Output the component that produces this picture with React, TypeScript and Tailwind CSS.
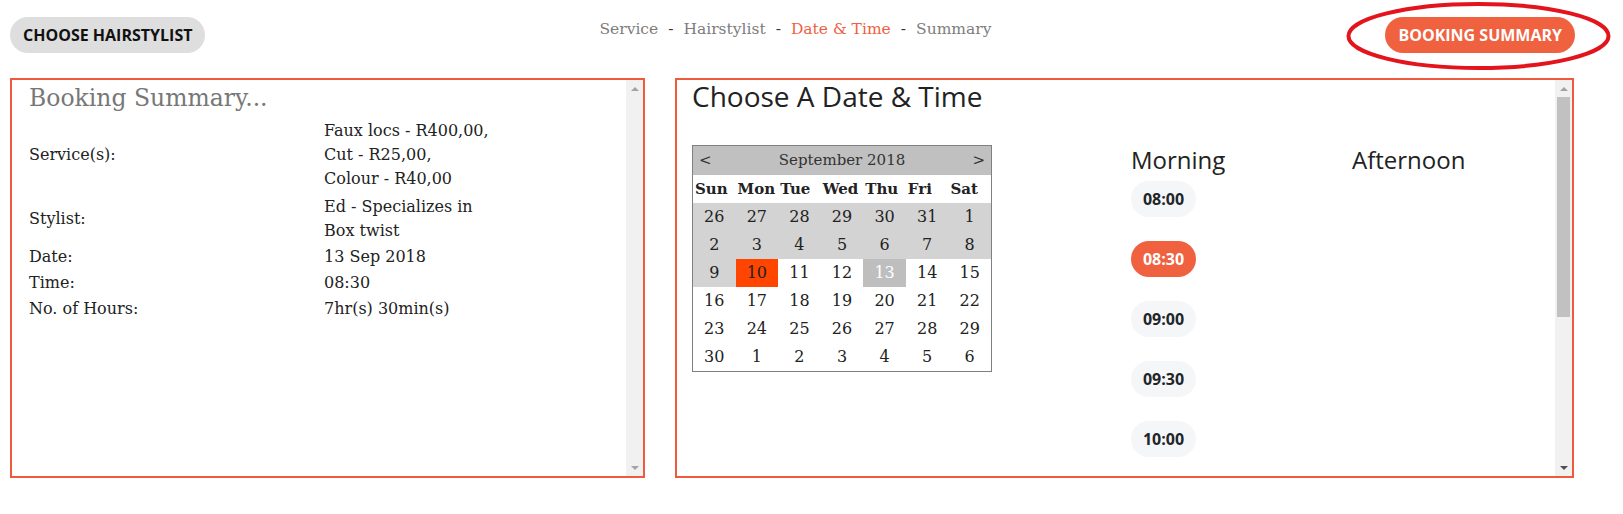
const weeks = [
  [26, 27, 28, 29, 30, 31, 1],
  [2, 3, 4, 5, 6, 7, 8],
  [9, 10, 11, 12, 13, 14, 15],
  [16, 17, 18, 19, 20, 21, 22],
  [23, 24, 25, 26, 27, 28, 29],
  [30, 1, 2, 3, 4, 5, 6],
];
const days = ["Sun", "Mon", "Tue", "Wed", "Thu", "Fri", "Sat"];
const times = ["08:00", "08:30", "09:00", "09:30", "10:00"];

const summary = [
  { label: "Service(s):", value: ["Faux locs - R400,00,", "Cut - R25,00,", "Colour - R40,00"] },
  { label: "Stylist:", value: ["Ed - Specializes in", "Box twist"] },
  { label: "Date:", value: ["13 Sep 2018"] },
  { label: "Time:", value: ["08:30"] },
  { label: "No. of Hours:", value: ["7hr(s) 30min(s)"] },
];

const Arrow = ({ up, color }: { up?: boolean; color: string }) => (
  <div className="h-[17px] flex items-center justify-center">
    {up ? (
      <div className={`w-0 h-0 border-x-[4px] border-x-transparent border-b-[4px] ${color}`} />
    ) : (
      <div className={`w-0 h-0 border-x-[4px] border-x-transparent border-t-[4px] ${color}`} />
    )}
  </div>
);

const Scrollbar = ({ thumb }: { thumb?: boolean }) => (
  <div className="w-[17px] shrink-0 bg-[#f1f1f1] flex flex-col">
    <Arrow up color="border-b-[#a3a3a3]" />
    <div className="flex-1 px-[2px]">
      {thumb && <div className="h-[220px] bg-[#c1c1c1]" />}
    </div>
    <Arrow color={thumb ? "border-t-[#505050]" : "border-t-[#a3a3a3]"} />
  </div>
);

const Calendar = () => (
  <div className="w-[300px] border border-[#808080] font-['DejaVu_Serif',serif] text-[#222]">
    <div className="h-[29px] bg-[#c0c0c0] flex items-center justify-between px-[6px] text-[15px] text-[#333]">
      <span>&lt;</span>
      <span>September 2018</span>
      <span>&gt;</span>
    </div>
    <div className="grid grid-cols-7 h-[28px] items-center text-[15px] font-bold">
      {days.map((d) => (
        <div key={d} className="pl-[2px] whitespace-nowrap">
          {d}
        </div>
      ))}
    </div>
    {weeks.map((week, wi) => (
      <div key={wi} className="grid grid-cols-7">
        {week.map((n, di) => {
          const past = wi < 2 || (wi === 2 && di === 0);
          const today = wi === 2 && n === 10;
          const picked = wi === 2 && n === 13;
          return (
            <div
              key={di}
              className={`h-[28px] flex items-center justify-center text-[16px] ${
                today
                  ? "bg-[#ff4500]"
                  : picked
                  ? "bg-[#bebebe] text-white"
                  : past
                  ? "bg-[#d3d3d3]"
                  : "bg-white"
              }`}
            >
              {n}
            </div>
          );
        })}
      </div>
    ))}
  </div>
);

export default function App() {
  return (
    <div className="w-[1623px] h-[514px] bg-white relative overflow-hidden">
      <header className="flex items-start justify-between pl-[10px] pr-[48px] pt-[17px]">
        <button className="h-9 px-[13px] rounded-full bg-[#dedede] text-[#111] font-['Open_Sans',sans-serif] font-bold text-[16px]">
          CHOOSE HAIRSTYLIST
        </button>
        <nav className="flex items-center gap-[10px] leading-[24px] text-[15.5px] font-['DejaVu_Serif',serif] text-[#7d7d7d]">
          <span>Service</span>
          <span className="text-[#333]">-</span>
          <span>Hairstylist</span>
          <span className="text-[#333]">-</span>
          <span className="text-[#f0603f]">Date &amp; Time</span>
          <span className="text-[#333]">-</span>
          <span>Summary</span>
        </nav>
        <button className="h-9 px-[13px] rounded-full bg-[#f0613f] text-white font-['Open_Sans',sans-serif] font-bold text-[16px]">
          BOOKING SUMMARY
        </button>
      </header>

      <svg className="absolute left-[1345px] top-[1px] pointer-events-none" width="267" height="70">
        <ellipse cx="133.5" cy="35" rx="130" ry="32" fill="none" stroke="#e3141c" strokeWidth="4" />
      </svg>

      <main className="flex gap-[30px] pl-[10px] mt-[25px]">
        <section className="w-[635px] h-[400px] border-2 border-[#f05a3c] flex">
          <div className="flex-1 pl-[17px] pt-[3px] font-['DejaVu_Serif',serif]">
            <h2 className="text-[23.5px] leading-[30px] text-[#777]">Booking Summary...</h2>
            <div className="mt-[5px] grid grid-cols-[295px_1fr] text-[16px] leading-[24px] text-[#222]">
              {summary.map((row, i) => (
                <div key={row.label} className="contents">
                  <div className={`py-px flex items-center ${i === 0 ? "mb-[2px]" : ""}`}>{row.label}</div>
                  <div className={`py-px ${i === 0 ? "mb-[2px]" : ""}`}>
                    {row.value.map((v) => (
                      <div key={v}>{v}</div>
                    ))}
                  </div>
                </div>
              ))}
            </div>
          </div>
          <Scrollbar />
        </section>

        <section className="w-[899px] h-[400px] border-2 border-[#f05a3c] flex">
          <div className="flex-1 pl-[15px]">
            <h2 className="font-['Open_Sans',sans-serif] text-[28px] leading-[32px] text-[#222]">
              Choose A Date &amp; Time
            </h2>
            <div className="mt-[33px] flex">
              <div className="w-[439px]">
                <Calendar />
              </div>
              <div className="w-[221px] font-['Open_Sans',sans-serif]">
                <h3 className="text-[24px] leading-[30px] text-[#222] mb-[6px]">Morning</h3>
                <div className="flex flex-col gap-[24px]">
                  {times.map((t) => (
                    <div
                      key={t}
                      className={`w-[65px] h-9 rounded-full flex items-center justify-center text-[16px] font-bold ${
                        t === "08:30" ? "bg-[#f0613f] text-white" : "bg-[#f5f6f8] text-[#212529]"
                      }`}
                    >
                      {t}
                    </div>
                  ))}
                </div>
              </div>
              <div className="font-['Open_Sans',sans-serif]">
                <h3 className="text-[24px] leading-[30px] text-[#222]">Afternoon</h3>
              </div>
            </div>
          </div>
          <Scrollbar thumb />
        </section>
      </main>
    </div>
  );
}
